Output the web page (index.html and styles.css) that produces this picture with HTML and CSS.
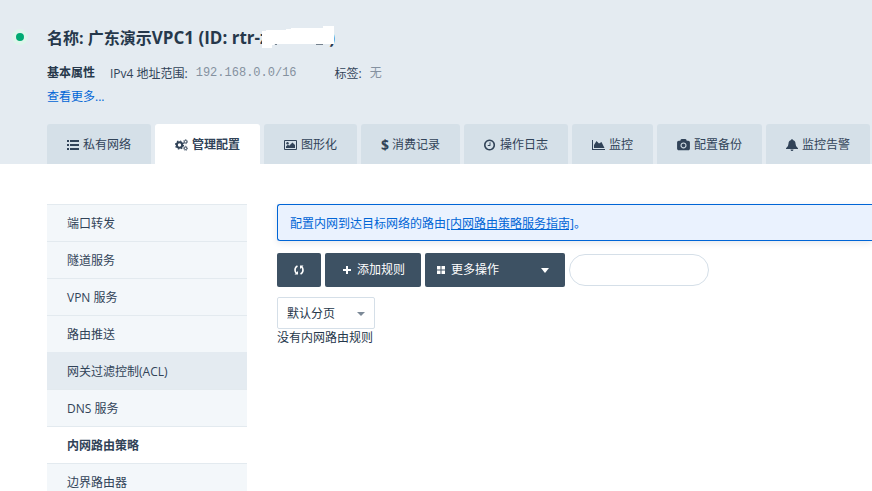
FILE: index.html
```html
<!DOCTYPE html>
<html lang="zh-CN">
<head>
<meta charset="utf-8">
<meta name="viewport" content="width=device-width, initial-scale=1">
<title>VPC 管理配置</title>
<link rel="stylesheet" href="styles.css">
</head>
<body>
<div class="page">
  <header class="header">
    <div class="summary">
      <span class="status"></span>
      <div class="info">
        <h1 class="title">名称: 广东演示<span class="title-id">VPC1 (ID: rtr-z</span><svg class="redaction" viewBox="0 0 74 24" aria-hidden="true"><path d="M0 5H4V4H24V3H29V2H61V0H72V18H12V19H10V22H0z" fill="#fff"/><path d="M13 18h2v1h-2zM54 18h7v1h-7z" fill="#74818e"/></svg><span class="title-id">)</span></h1>
        <div class="props">
          <strong class="props-name">基本属性</strong>
          <span class="prop"><span class="prop-label">IPv4 地址范围:</span><span class="prop-value mono">192.168.0.0/16</span></span>
          <span class="prop"><span class="prop-label">标签:</span><span class="prop-value">无</span></span>
        </div>
        <a class="more" href="#">查看更多...</a>
      </div>
    </div>
    <nav class="tabs">
      <a class="tab" href="#"><svg class="icon" viewBox="0 0 12 12"><path d="M0 1h2v2H0zM3 1h9v2H3zM0 5h2v2H0zM3 5h9v2H3zM0 9h2v2H0zM3 9h9v2H3z"/></svg>私有网络</a>
      <a class="tab active" href="#"><svg class="icon wide" viewBox="0 0 13 12"><g fill="none" stroke="currentColor"><circle cx="4.5" cy="6" r="2.700" stroke-width="2"/><circle cx="4.5" cy="6" r="4" stroke-width="1.2" stroke-dasharray="1.5 1.642"/><circle cx="10.6" cy="2.7" r="1.3" stroke-width="1"/><circle cx="10.6" cy="2.7" r="2.1" stroke-width=".7" stroke-dasharray=".9 .749"/><circle cx="10.6" cy="9.3" r="1.3" stroke-width="1"/><circle cx="10.6" cy="9.3" r="2.1" stroke-width=".7" stroke-dasharray=".9 .749"/></g></svg>管理配置</a>
      <a class="tab" href="#"><svg class="icon wide" viewBox="0 0 13 12"><path fill-rule="evenodd" d="M1 1h11q1 0 1 1v8q0 1-1 1H1q-1 0-1-1V2q0-1 1-1zM1 2v8h11V2z"/><circle cx="3.5" cy="4.2" r="1.2"/><path d="M2 9V7.5l2-2 1.200 1.200L8.500 3.500 11 6v3z"/></svg>图形化</a>
      <a class="tab" href="#"><span class="dollar">$</span>消费记录</a>
      <a class="tab" href="#"><svg class="icon" viewBox="128 128 1664 1536"><path d="M1024 544v448q0 14-9 23t-23 9h-320q-14 0-23-9t-9-23v-64q0-14 9-23t23-9h224v-352q0-14 9-23t23-9h64q14 0 23 9t9 23zm416 352q0-148-73-273t-198-198-273-73-273 73-198 198-73 273 73 273 198 198 273 73 273-73 198-198 73-273zm224 0q0 209-103 385.500t-279.500 279.500-385.500 103-385.500-103-279.500-279.500-103-385.500 103-385.500 279.500-279.500 385.500-103 385.500 103 279.500 279.500 103 385.500z"/></svg>操作日志</a>
      <a class="tab" href="#"><svg class="icon wide" viewBox="0 0 13 12"><path d="M0 1h1v9h12v1H0zM2 9V6l2.500-4L7 4.500 9.500 3l3 6z"/></svg>监控</a>
      <a class="tab" href="#"><svg class="icon wide" viewBox="0 0 1920 1792"><path d="M960 672q119 0 203.500 84.500t84.500 203.500-84.500 203.500-203.500 84.500-203.500-84.500-84.500-203.500 84.500-203.500 203.500-84.500zm704-416q106 0 181 75t75 181v896q0 106-75 181t-181 75h-1408q-106 0-181-75t-75-181v-896q0-106 75-181t181-75h224l51-136q19-49 69.500-84.500t103.500-35.500h512q53 0 103.500 35.500t69.500 84.500l51 136h224zm-704 1152q185 0 316.500-131.500t131.500-316.500-131.500-316.500-316.500-131.500-316.500 131.500-131.500 316.500 131.500 316.500 316.500 131.500z"/></svg>配置备份</a>
      <a class="tab" href="#"><svg class="icon" viewBox="0 0 12 12"><path d="M6 0q.8 0 .8.9 2.700.6 2.700 3.600 0 3.500 2.500 4.700V10H0v-.8q2.500-1.200 2.500-4.700 0-3 2.700-3.600Q5.200 0 6 0zM4.500 10.500h3Q7.300 12 6 12t-1.500-1.500z"/></svg>监控告警</a>
    </nav>
  </header>
  <main class="main">
    <nav class="side">
      <a class="side-item" href="#">端口转发</a>
      <a class="side-item" href="#">隧道服务</a>
      <a class="side-item" href="#">VPN 服务</a>
      <a class="side-item" href="#">路由推送</a>
      <a class="side-item highlighted" href="#">网关过滤控制(ACL)</a>
      <a class="side-item" href="#">DNS 服务</a>
      <a class="side-item current" href="#">内网路由策略</a>
      <a class="side-item" href="#">边界路由器</a>
    </nav>
    <section class="content">
      <p class="notice">配置内网到达目标网络的路由<a href="#">[内网路由策略服务指南]</a>。</p>
      <div class="toolbar">
        <button class="btn" type="button" aria-label="刷新"><svg class="icon" viewBox="0 0 12 12"><g fill="none" stroke="currentColor" stroke-width="1.600"><path d="M4.500 2Q2 3.200 2 6q0 2 1.500 3.300M7.500 10Q10 8.800 10 6q0-2-1.500-3.300"/></g><path d="M1.500 10.500H5V7zM10.500 1.500H7V5z"/></svg></button>
        <button class="btn" type="button"><svg class="icon" viewBox="0 0 12 12"><path d="M5 2h2v3h3v2H7v3H5V7H2V5h3z"/></svg>添加规则</button>
        <button class="btn dropdown" type="button"><svg class="icon" viewBox="0 0 12 12"><path d="M2 2h3.500v3.500H2zM6.500 2H10v3.500H6.500zM2 6.500h3.500V10H2zM6.500 6.500H10V10H6.500z"/></svg>更多操作<span class="caret"></span></button>
        <input class="search" type="text" aria-label="搜索">
      </div>
      <div class="pager">
        <select class="pager-select" aria-label="分页"><option>默认分页</option></select>
      </div>
      <p class="empty">没有内网路由规则</p>
    </section>
  </main>
</div>
</body>
</html>
```
FILE: styles.css
```css
* {
  box-sizing: border-box;
}

body {
  margin: 0;
  background: #fff;
  color: #314358;
  font: 12px/16px "Open Sans", "Noto Sans CJK SC", sans-serif;
}

a {
  color: inherit;
  text-decoration: none;
}

h1,
p {
  margin: 0;
}

.page {
  height: 100vh;
  overflow: hidden;
}

.header {
  padding-top: 24px;
  background: #e4ebf1;
}

.summary {
  display: flex;
  gap: 19px;
  padding-left: 12px;
}

.status {
  width: 16px;
  height: 16px;
  margin-top: 5px;
  border: 4px solid #dff5ec;
  border-radius: 50%;
  background: #00aa72;
}

.title {
  display: flex;
  align-items: center;
  color: #26384b;
  font-size: 16px;
  line-height: 28px;
  white-space: pre;
}

.title-id {
  font-size: 17px;
}

.redaction {
  z-index: 1;
  width: 74px;
  height: 24px;
  margin: 0 -7px 0 -6px;
}

.props {
  display: flex;
  height: 24px;
  margin-top: 9px;
  line-height: 24px;
}

.props-name {
  margin-right: 15px;
  color: #26384b;
}

.prop {
  display: flex;
  gap: 8px;
  margin-right: 38px;
}

.prop-label {
  line-height: 26px;
}

.prop-value {
  color: #8491a0;
}

.mono {
  font-family: "Liberation Mono", monospace;
}

.more {
  display: block;
  width: max-content;
  color: #0065d6;
  line-height: 24px;
}

.tabs {
  display: flex;
  gap: 4px;
  margin-top: 15px;
  padding-left: 47px;
}

.tab {
  display: flex;
  flex: none;
  align-items: center;
  gap: 4px;
  height: 40px;
  padding: 1px 20px 0;
  border-radius: 3px 3px 0 0;
  background: #d5e0e8;
  white-space: nowrap;
}

.tab.active {
  background: #fff;
  font-weight: 700;
}

.icon {
  flex: none;
  width: 12px;
  height: 12px;
  fill: currentColor;
}

.icon.wide {
  width: 13px;
}

.dollar {
  width: 7px;
  font-size: 14px;
  font-weight: 700;
}

.main {
  display: flex;
  gap: 30px;
  padding: 40px 0 0 47px;
}

.side {
  flex: none;
  width: 200px;
}

.side-item {
  display: block;
  height: 37px;
  padding: 0 20px;
  border-top: 1px solid #e3eaef;
  background: #f3f7fa;
  line-height: 38px;
}

.side-item.highlighted {
  border-color: #e4ebf1;
  background: #e4ebf1;
}

.side-item.current {
  background: #fff;
  font-weight: 700;
}

.content {
  flex: 1;
  min-width: 0;
}

.notice {
  padding: 10px 12px 8px;
  border: 1px solid #0065d6;
  border-right: 0;
  border-radius: 3px 0 0 3px;
  background: #eaf2fe;
  box-shadow: 0 2px 6px rgba(40, 60, 90, 0.12);
  color: #0065d6;
  line-height: 17px;
}

.notice a {
  text-decoration: underline;
}

.toolbar {
  display: flex;
  align-items: center;
  gap: 4px;
  margin-top: 12px;
}

.btn {
  display: flex;
  align-items: center;
  gap: 4px;
  height: 34px;
  padding: 0 16px;
  border: 0;
  border-radius: 2px;
  background: #3d5163;
  color: #fff;
  font: inherit;
}

.btn.dropdown {
  width: 140px;
  padding: 0 16px 0 10px;
}

.caret {
  margin-left: auto;
  border: 4px solid transparent;
  border-top: 5px solid #fff;
  border-bottom: 0;
}

.search {
  width: 140px;
  height: 32px;
  padding: 0 14px;
  border: 1px solid #d5dfe8;
  border-radius: 16px;
  background: #fff;
  font: inherit;
}

.pager {
  position: relative;
  display: flex;
  width: max-content;
  margin-top: 10px;
}

.pager::after {
  position: absolute;
  top: 15px;
  right: 10px;
  border: 4px solid transparent;
  border-top-color: #7c8997;
  border-bottom: 0;
  content: "";
  pointer-events: none;
}

.pager-select {
  width: 98px;
  height: 32px;
  padding: 1px 9px 0;
  appearance: none;
  border: 1px solid #d5dfe8;
  border-radius: 2px;
  background: #fff;
  color: #26384b;
  font: inherit;
}

.empty {
  color: #26384b;
  line-height: 18px;
}
```
